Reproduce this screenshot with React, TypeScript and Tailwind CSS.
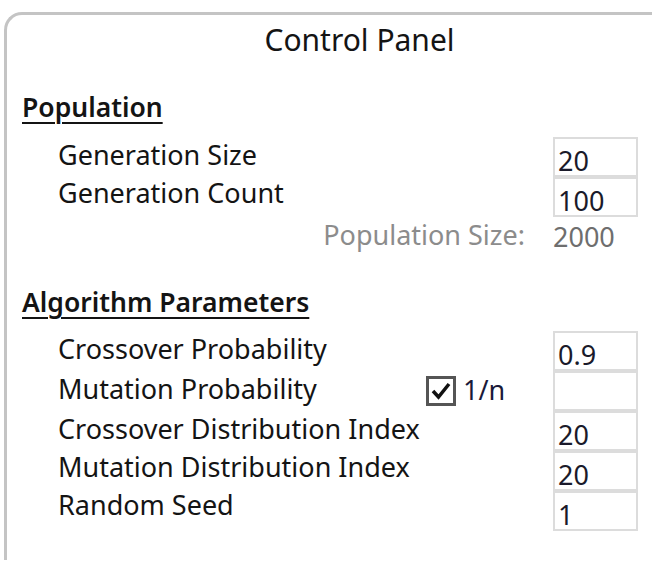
import React from "react";

const Input = ({ value }: { value?: string }) => (
  <div className="w-[85px] h-[40px] border-2 border-[#dcdcdc] bg-white flex items-center pl-[3px] pt-[6px] text-[#1a1a2a] leading-none">
    {value}
  </div>
);

const Row = ({
  label,
  value,
  children,
  pad = "pb-[4px]",
}: {
  label: string;
  value?: string;
  children?: React.ReactNode;
  pad?: string;
}) => (
  <div className="flex items-center h-[40px]">
    <div className={`pl-[51px] w-[419px] shrink-0 text-[#141414] ${pad}`}>{label}</div>
    <div className="flex-1 flex items-center">{children}</div>
    <Input value={value} />
  </div>
);

export default function App() {
  return (
    <div
      className="w-[652px] h-[570px] bg-white overflow-hidden text-[27px] leading-[32px]"
      style={{ fontFamily: '"Noto Sans", "Open Sans", sans-serif' }}
    >
      <div className="ml-[4px] mt-[12px] w-[708px] h-[548px] border-t-[3px] border-l-[3px] border-[#c4c4c4] rounded-tl-[18px]">
        <div className="pt-[7px] text-center text-[#141414] text-[30px] leading-[36px] h-[43px]">Control Panel</div>
        <div className="w-[631px]">
          <div className="mt-[33px] pl-[15px] h-[32px]">
            <span className="font-semibold text-[#141414] text-[26.5px] underline decoration-2 underline-offset-[5px]">Population</span>
          </div>
          <div className="mt-[14px]">
            <Row label="Generation Size" value="20" />
            <Row label="Generation Count" value="100" pad="pb-[8px]" />
            <div className="flex items-center justify-end h-[36px]">
              <span className="text-[#8c8c8c] mr-[28px]">Population Size:</span>
              <span className="w-[85px] text-[#6e6e6e] pt-[4px]">2000</span>
            </div>
          </div>
          <div className="mt-[33px] pl-[15px] h-[32px]">
            <span className="font-semibold text-[#141414] text-[26.5px] underline decoration-2 underline-offset-[5px]">Algorithm Parameters</span>
          </div>
          <div className="mt-[13px]">
            <Row label="Crossover Probability" value="0.9" />
            <Row label="Mutation Probability">
              <div className="w-[30px] h-[30px] border-[3px] border-[#555555] bg-white flex items-center justify-center">
                <svg width="22" height="20" viewBox="0 0 22 20">
                  <path d="M3 10 L8.5 16 L19 3" fill="none" stroke="#111111" strokeWidth="3.5" strokeLinejoin="miter" />
                </svg>
              </div>
              <span className="ml-[7px] text-[#1a1a3a] pb-[2px]">1/n</span>
            </Row>
            <Row label="Crossover Distribution Index" value="20" />
            <Row label="Mutation Distribution Index" value="20" pad="pb-[8px]" />
            <Row label="Random Seed" value="1" pad="pb-[12px]" />
          </div>
        </div>
      </div>
    </div>
  );
}
